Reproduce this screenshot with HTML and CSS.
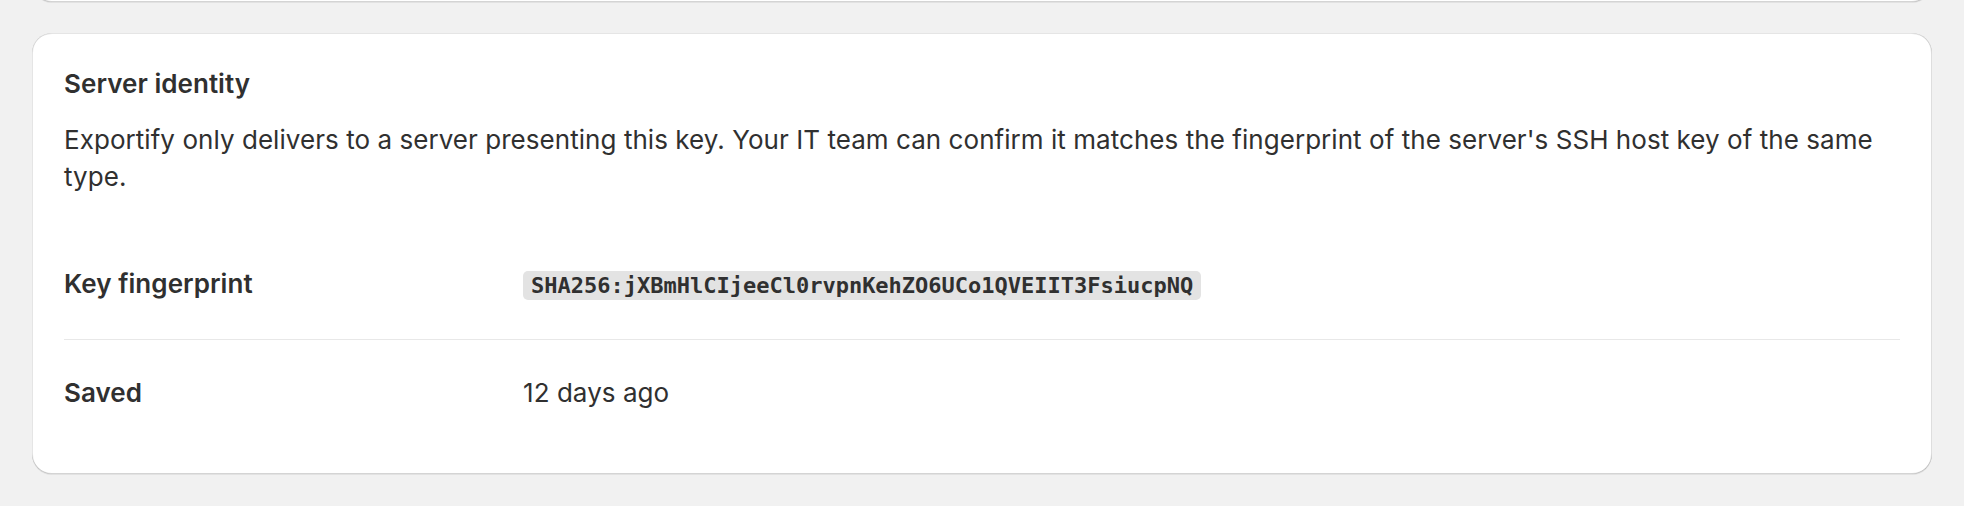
FILE: index.html
```html
<!DOCTYPE html>
<html lang="en">
<head>
<meta charset="utf-8">
<title>Server identity</title>
<link rel="stylesheet" href="styles.css">
</head>
<body>
<div class="page">
  <div class="card card-prev"></div>
  <section class="card">
    <h2 class="card-title">Server identity</h2>
    <p class="card-text">Exportify only delivers to a server presenting this key. Your IT team can confirm it matches the fingerprint of the server's SSH host key of the same type.</p>
    <dl class="details">
      <div class="row">
        <dt class="label">Key fingerprint</dt>
        <dd class="value"><code class="fingerprint">SHA256:jXBmHlCIjeeCl0rvpnKehZO6UCo1QVEIIT3FsiucpNQ</code></dd>
      </div>
      <div class="row">
        <dt class="label">Saved</dt>
        <dd class="value">12 days ago</dd>
      </div>
    </dl>
  </section>
</div>
</body>
</html>
```

FILE: styles.css
```css
html, body {
  margin: 0;
  padding: 0;
  background: #f1f1f1;
}

body {
  font-family: "Inter", "Liberation Sans", sans-serif;
  font-size: 26px;
  line-height: 37.5px;
  letter-spacing: 0.05px;
  color: #303030;
}

.page {
  display: flex;
  flex-direction: column;
  gap: 31px;
  padding: 0 32px 32px 32px;
  margin-top: -40px;
}

.card {
  background: #ffffff;
  border-radius: 20px;
  box-shadow:
    0 1px 0 0 rgba(26, 26, 26, 0.07),
    inset 1px 0 0 0 rgba(0, 0, 0, 0.10),
    inset -1px 0 0 0 rgba(0, 0, 0, 0.13),
    inset 0 -1px 0 0 rgba(0, 0, 0, 0.17),
    inset 0 1px 0 0 rgba(204, 204, 204, 0.5);
  padding: 32px 32px 29px 32px;
}

.card-prev {
  height: 42px;
  padding: 0;
}

.card-title {
  margin: 0;
  font-size: 26px;
  font-weight: 600;
  line-height: 37.5px;
}

.card-text {
  margin: 18px 0 0 0;
  font-weight: 400;
}

.details {
  margin: 35px 0 0 0;
}

.row {
  display: grid;
  grid-template-columns: 1fr 3fr;
  padding: 34.5px 0;
}

.row + .row {
  border-top: 1px solid #e8e8e8;
  padding: 33.5px 0;
}

.label {
  margin: 0;
  font-weight: 600;
}

.value {
  margin: 0;
  font-weight: 400;
}

.fingerprint {
  font-family: "DejaVu Sans Mono", "Liberation Mono", monospace;
  font-size: 22px;
  font-weight: 700;
  letter-spacing: 0;
  background: #e3e3e3;
  border-radius: 5px;
  padding: 2px 8px;
  color: #303030;
}
```
